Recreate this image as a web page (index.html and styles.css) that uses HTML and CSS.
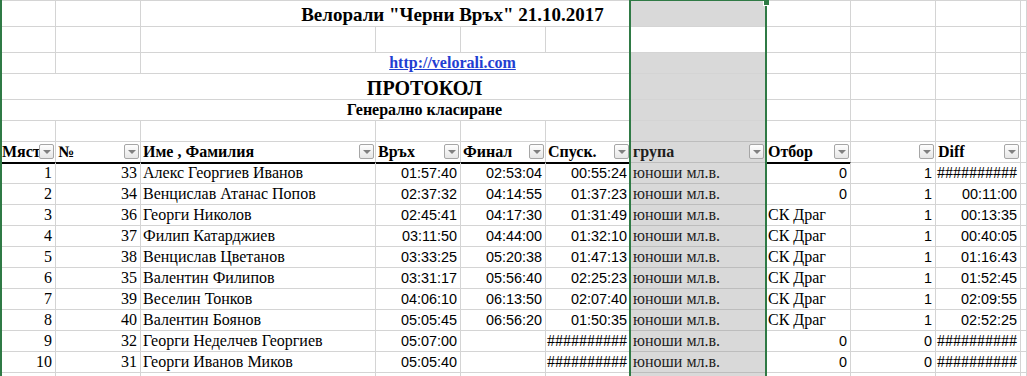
FILE: index.html
```html
<!DOCTYPE html>
<html lang="bg">
<head>
<meta charset="utf-8">
<title>Велорали "Черни Връх" 21.10.2017</title>
<link rel="stylesheet" href="styles.css">
</head>
<body>
<div class="sheet">
  <div class="row h26">
    <div class="c"></div>
    <div class="c"></div>
    <div class="c shade"></div>
    <div class="c span-cg ctr b title">Велорали "Черни Връх" 21.10.2017</div>
    <div class="c"></div>
    <div class="c"></div>
    <div class="c"></div>
    <div class="c"></div>
  </div>
  <div class="row h26">
    <div class="c"></div><div class="c"></div><div class="c"></div><div class="c"></div><div class="c"></div><div class="c"></div>
    <div class="c"></div>
    <div class="c"></div><div class="c"></div><div class="c"></div><div class="c"></div>
  </div>
  <div class="row h21">
    <div class="c"></div>
    <div class="c"></div>
    <div class="c shade"></div>
    <div class="c span-cg ctr b"><a class="link" href="#">http://velorali.com</a></div>
    <div class="c"></div>
    <div class="c"></div>
    <div class="c"></div>
    <div class="c"></div>
  </div>
  <div class="row h26">
    <div class="c shade"></div>
    <div class="c span-ah ctr b proto">ПРОТОКОЛ</div>
    <div class="c"></div>
    <div class="c"></div>
    <div class="c"></div>
  </div>
  <div class="row h21">
    <div class="c shade"></div>
    <div class="c span-ah ctr b">Генерално класиране</div>
    <div class="c"></div>
    <div class="c"></div>
    <div class="c"></div>
  </div>
  <div class="row h21">
    <div class="c"></div><div class="c"></div><div class="c"></div><div class="c"></div><div class="c"></div><div class="c"></div>
    <div class="c g"></div>
    <div class="c"></div><div class="c"></div><div class="c"></div><div class="c"></div>
  </div>
  <div class="row h21 head">
    <div class="c hd"><span class="ht">Място</span><span class="fb"></span></div>
    <div class="c hd"><span class="ht">№</span><span class="fb"></span></div>
    <div class="c hd"><span class="ht">Име , Фамилия</span><span class="fb"></span></div>
    <div class="c hd"><span class="ht">Връх</span><span class="fb"></span></div>
    <div class="c hd"><span class="ht">Финал</span><span class="fb"></span></div>
    <div class="c hd"><span class="ht">Спуск.</span><span class="fb"></span></div>
    <div class="c hd g"><span class="ht">група</span><span class="fb"></span></div>
    <div class="c hd"><span class="ht">Отбор</span><span class="fb"></span></div>
    <div class="c hd plain"><span class="ht"></span><span class="fb"></span></div>
    <div class="c hd plain"><span class="ht">Diff</span><span class="fb"></span></div>
    <div class="c plain"></div>
  </div>

  <div class="row h21">
    <div class="c r">1</div><div class="c r">33</div><div class="c">Алекс Георгиев Иванов</div>
    <div class="c r n">01:57:40</div><div class="c r n">02:53:04</div><div class="c r n">00:55:24</div>
    <div class="c g">юноши мл.в.</div><div class="c r n">0</div><div class="c r n">1</div><div class="c r">##########</div><div class="c"></div>
  </div>
  <div class="row h21">
    <div class="c r">2</div><div class="c r">34</div><div class="c">Венцислав Атанас Попов</div>
    <div class="c r n">02:37:32</div><div class="c r n">04:14:55</div><div class="c r n">01:37:23</div>
    <div class="c g">юноши мл.в.</div><div class="c r n">0</div><div class="c r n">1</div><div class="c r n">00:11:00</div><div class="c"></div>
  </div>
  <div class="row h21">
    <div class="c r">3</div><div class="c r">36</div><div class="c">Георги Николов</div>
    <div class="c r n">02:45:41</div><div class="c r n">04:17:30</div><div class="c r n">01:31:49</div>
    <div class="c g">юноши мл.в.</div><div class="c">СК Драг</div><div class="c r n">1</div><div class="c r n">00:13:35</div><div class="c"></div>
  </div>
  <div class="row h21">
    <div class="c r">4</div><div class="c r">37</div><div class="c">Филип Катарджиев</div>
    <div class="c r n">03:11:50</div><div class="c r n">04:44:00</div><div class="c r n">01:32:10</div>
    <div class="c g">юноши мл.в.</div><div class="c">СК Драг</div><div class="c r n">1</div><div class="c r n">00:40:05</div><div class="c"></div>
  </div>
  <div class="row h21">
    <div class="c r">5</div><div class="c r">38</div><div class="c">Венцислав Цветанов</div>
    <div class="c r n">03:33:25</div><div class="c r n">05:20:38</div><div class="c r n">01:47:13</div>
    <div class="c g">юноши мл.в.</div><div class="c">СК Драг</div><div class="c r n">1</div><div class="c r n">01:16:43</div><div class="c"></div>
  </div>
  <div class="row h21">
    <div class="c r">6</div><div class="c r">35</div><div class="c">Валентин Филипов</div>
    <div class="c r n">03:31:17</div><div class="c r n">05:56:40</div><div class="c r n">02:25:23</div>
    <div class="c g">юноши мл.в.</div><div class="c">СК Драг</div><div class="c r n">1</div><div class="c r n">01:52:45</div><div class="c"></div>
  </div>
  <div class="row h21">
    <div class="c r">7</div><div class="c r">39</div><div class="c">Веселин Тонков</div>
    <div class="c r n">04:06:10</div><div class="c r n">06:13:50</div><div class="c r n">02:07:40</div>
    <div class="c g">юноши мл.в.</div><div class="c">СК Драг</div><div class="c r n">1</div><div class="c r n">02:09:55</div><div class="c"></div>
  </div>
  <div class="row h21">
    <div class="c r">8</div><div class="c r">40</div><div class="c">Валентин Боянов</div>
    <div class="c r n">05:05:45</div><div class="c r n">06:56:20</div><div class="c r n">01:50:35</div>
    <div class="c g">юноши мл.в.</div><div class="c">СК Драг</div><div class="c r n">1</div><div class="c r n">02:52:25</div><div class="c"></div>
  </div>
  <div class="row h21">
    <div class="c r">9</div><div class="c r">32</div><div class="c">Георги Неделчев Георгиев</div>
    <div class="c r n">05:07:00</div><div class="c r n"></div><div class="c r">##########</div>
    <div class="c g">юноши мл.в.</div><div class="c r n">0</div><div class="c r n">0</div><div class="c r">##########</div><div class="c"></div>
  </div>
  <div class="row h21">
    <div class="c r">10</div><div class="c r">31</div><div class="c">Георги Иванов Миков</div>
    <div class="c r n">05:05:40</div><div class="c r n"></div><div class="c r">##########</div>
    <div class="c g">юноши мл.в.</div><div class="c r n">0</div><div class="c r n">0</div><div class="c r">##########</div><div class="c"></div>
  </div>
  <div class="row h21">
    <div class="c"></div><div class="c"></div><div class="c"></div><div class="c"></div><div class="c"></div><div class="c"></div>
    <div class="c g"></div>
    <div class="c"></div><div class="c"></div><div class="c"></div><div class="c"></div>
  </div>

  <div class="edge"></div>
  <div class="selection"></div>
  <div class="handle"></div>
</div>
</body>
</html>
```

FILE: styles.css
```css
html, body {
  margin: 0;
  padding: 0;
  background: #fff;
}

body {
  width: 1027px;
  height: 376px;
  overflow: hidden;
  font-family: "Liberation Serif", "Times New Roman", serif;
  font-size: 16px;
  color: #000;
}

.sheet {
  position: relative;
  border-top: 1px solid #d4d4d4;
}

.row {
  display: grid;
  grid-template-columns: 56px 85px 235px 85px 85px 85px 135px 85px 85px 85px 1fr;
}

.h26 .c { height: 26px; }
.h21 .c { height: 21px; }

.c {
  box-sizing: border-box;
  border-right: 1px solid #d4d4d4;
  border-bottom: 1px solid #d4d4d4;
  display: flex;
  align-items: flex-end;
  padding: 0 3px 0 2px;
  line-height: 20px;
  white-space: nowrap;
  overflow: hidden;
  min-width: 0;
}

.r { justify-content: flex-end; }

.n {
  font-family: "Liberation Sans", Arial, sans-serif;
  font-size: 14.4px;
}

.b { font-weight: bold; }

.ctr { justify-content: center; }

.g {
  background: #d9d9d9;
  color: #1e1e1e;
  border-bottom-color: #bdbdbd;
}

.shade {
  grid-column: 7;
  grid-row: 1;
  background: #d9d9d9;
  border-bottom-color: #bdbdbd;
}

.span-cg {
  grid-column: 3 / 8;
  grid-row: 1;
  background: transparent;
}

.span-ah {
  grid-column: 1 / 9;
  grid-row: 1;
  background: transparent;
}

.title {
  font-size: 19px;
  padding-bottom: 1px;
}

.proto {
  font-size: 20px;
  padding-bottom: 1px;
}

.link {
  color: #1f3ed2;
  text-decoration: underline;
}

/* header row with filter buttons */
.head .c {
  border-bottom-color: #000;
  box-shadow: 0 1px 0 #000;
  padding-right: 1px;
  overflow: visible;
}

.head .c.g {
  border-bottom-color: #bdbdbd;
  box-shadow: none;
}

.head .c.plain {
  border-bottom-color: #d4d4d4;
  box-shadow: none;
}

.hd { align-items: stretch; }

.ht {
  flex: 1 1 auto;
  min-width: 0;
  overflow: hidden;
  white-space: nowrap;
  align-self: flex-end;
  font-weight: bold;
}

.fb {
  flex: 0 0 15px;
  height: 15px;
  margin-top: 2px;
  box-sizing: border-box;
  border: 1px solid #a6a6a6;
  border-radius: 2px;
  background: linear-gradient(#fefefe, #e6e6e6);
  display: flex;
  align-items: center;
  justify-content: center;
}

.fb::after {
  content: "";
  width: 0;
  height: 0;
  border-left: 4px solid transparent;
  border-right: 4px solid transparent;
  border-top: 4px solid #808080;
  margin-top: 1px;
}

/* overlays: sheet edge and column selection */
.edge {
  position: absolute;
  left: 0;
  top: -1px;
  bottom: 0;
  width: 2px;
  background: #2f7a45;
}

.selection {
  position: absolute;
  left: 629px;
  top: -1px;
  width: 138px;
  height: 380px;
  box-sizing: border-box;
  border-left: 2px solid #2f7a45;
  border-right: 2px solid #2f7a45;
  border-top: 1px solid #2f7a45;
  pointer-events: none;
}

.handle {
  position: absolute;
  left: 764px;
  top: -1px;
  width: 5px;
  height: 5px;
  background: #2f7a45;
  box-shadow: -1px 1px 0 #fff;
}
```
